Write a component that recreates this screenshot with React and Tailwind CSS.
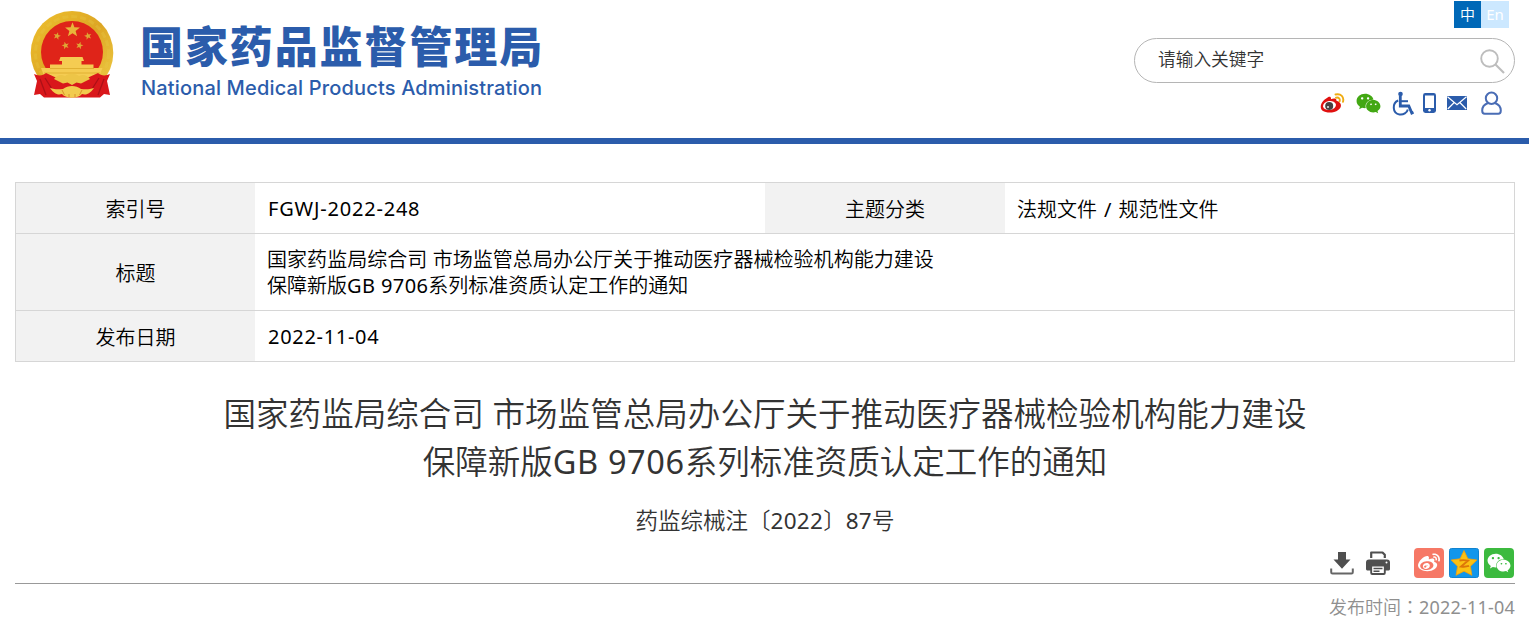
import React from "react";
import { FaWeixin, FaWeibo } from "react-icons/fa";

const star = (cx, cy, r, rot = 0) =>
  Array.from({ length: 10 }, (_, i) => {
    const a = ((i * 36 - 90 + rot) * Math.PI) / 180;
    const q = i % 2 ? r * 0.42 : r;
    return `${(cx + q * Math.cos(a)).toFixed(2)},${(cy + q * Math.sin(a)).toFixed(2)}`;
  }).join(" ");

function Emblem() {
  return (
    <svg width="84" height="90" viewBox="0 0 84 90" className="block">
      <defs>
        <linearGradient id="gold" x1="0" y1="0" x2="1" y2="1">
          <stop offset="0" stopColor="#eec12f" />
          <stop offset="0.5" stopColor="#dda624" />
          <stop offset="1" stopColor="#f0cf48" />
        </linearGradient>
      </defs>
      <ellipse cx="42" cy="42" rx="41.3" ry="42" fill="url(#gold)" />
      <circle cx="42" cy="42" r="36.5" fill="none" stroke="#e9c94a" strokeWidth="3" strokeDasharray="6 3" opacity="0.3" />
      <circle cx="42" cy="41" r="31" fill="#df2419" />
      <polygon points={star(42.5, 19, 7.8)} fill="#e8b63a" />
      <polygon points={star(27, 25, 3.9, 15)} fill="#dfa635" />
      <polygon points={star(58, 25, 3.9, -15)} fill="#dfa635" />
      <polygon points={star(35.500, 34.500, 3.9, -15)} fill="#dfa635" />
      <polygon points={star(49.500, 34.500, 3.9, 15)} fill="#dfa635" />
      <path d="M30.500 46h22l1.500 4h-2.500v3.500h12v3.500h9l-3 8-8 6H22l-8-6-3-8h9v-3.500h12V50h-3z" fill="#f5cc52" />
      <path d="M20 57.500h44M14 62h56" stroke="#dba92c" strokeWidth="0.8" />
      <path d="M4 63c4 2 9 2 12-1l13 6 13 4 13-4 13-6c3 3 8 3 12 1l-3 7 3 14-6-1-4 3.500H14L10 83l-6 1 3-14z" fill="#d9171b" />
      <path d="M10 68l6 16M15 67l7 11M74 68l-6 16M69 67l-7 11" stroke="#ad1017" strokeWidth="1.300" fill="none" />
      <path d="M24 68c3-4 7-5 11-3 4-3 10-3 14 0 4-2 8-1 11 3l-9 4.500-4.500-1-4.500 2.500-4.500-2.500-4.500 1z" fill="#edc547" />
      <path d="M20 77c6 2 10 1 13 1 5-4 13-4 18 0 3 0 7 1 13-1-5 7-9 7-12 6-4 5-16 5-20 0-3 1-7 1-12-6z" fill="#f2cb4e" />
      <path d="M32 79l2.500 5M52 79l-2.500 5M39 83v3M45 83v3" stroke="#d9902a" strokeWidth="1" />
    </svg>
  );
}

function WeiboEye() {
  return (
    <svg width="25" height="20" viewBox="0 0 25 20" className="block">
      <path d="M8 4.2c2-1 3.400-.2 2.900 2 3-1.200 6-1 5.500 1.600 6 1.800 5.500 6.400 1.800 9.200-4.200 3.200-11.600 3.400-15.600.8C-.6 15.200-.2 9 8 4.200z" fill="#e0100f" />
      <ellipse cx="9.500" cy="12.500" rx="6.500" ry="4.500" fill="#fff" transform="rotate(-8 9.500 12.500)" />
      <circle cx="9.200" cy="12.900" r="4" fill="#474040" />
      <circle cx="8" cy="14" r="1.100" fill="#ddd" />
      <path d="M15.500 1.500c5.500-1.300 8.800 2.400 7.500 7.300M16 4.700c2.900-.6 4.300 1 3.600 3.600" fill="none" stroke="#efac12" strokeWidth="1.900" strokeLinecap="round" />
    </svg>
  );
}

function Wheelchair() {
  return (
    <svg width="22" height="25" viewBox="0 0 22 25" className="block" fill="none" stroke="#2b5cab" strokeWidth="2">
      <circle cx="8.500" cy="3" r="2.300" fill="#2b5cab" stroke="none" />
      <path d="M8.300 5v10h8.500l3 7 1.700-.8" strokeWidth="2.800" />
      <path d="M8.500 10.200h7.500" />
      <path d="M6.200 9.500C0 12 .2 22.500 7.500 23.500c4 .6 7.500-1.700 8.300-5" strokeWidth="2" />
    </svg>
  );
}

function Phone() {
  return (
    <svg width="13" height="20" viewBox="0 0 13 20" className="block">
      <rect width="13" height="20" rx="2.400" fill="#2b5cab" />
      <rect x="2" y="2.500" width="9" height="12.500" fill="#fff" />
      <circle cx="6.500" cy="17.300" r="1.200" fill="#fff" />
    </svg>
  );
}

function Mail() {
  return (
    <svg width="20" height="14" viewBox="0 0 20 14" className="block">
      <rect width="20" height="14" rx="0.600" fill="#2b5cab" />
      <path d="M.5.800L10 8.600 19.500.800M.8 13l6.400-6.500M19.200 13l-6.400-6.500" fill="none" stroke="#fff" strokeWidth="1.200" />
    </svg>
  );
}

function Person() {
  return (
    <svg width="21" height="24" viewBox="0 0 21 24" className="block" fill="none" stroke="#4a6db5" strokeWidth="2">
      <circle cx="10.500" cy="7.300" r="5.700" />
      <path d="M7 12C3 13.500 1.200 16 1.200 19.500c0 2.500.8 3.300 2.500 3.300h13.600c1.700 0 2.500-.8 2.500-3.300 0-3.500-1.800-6-5.800-7.500" />
    </svg>
  );
}

function Download() {
  return (
    <svg width="24" height="24" viewBox="0 0 24 24" className="block">
      <path d="M8 1h8v7.500h4.500L12 17.800 3.500 8.500H8z" fill="#4f4f4f" />
      <path d="M1.200 17.500v3.700q0 1.300 1.300 1.300h19q1.300 0 1.300-1.300v-3.700" fill="none" stroke="#666" strokeWidth="2" />
    </svg>
  );
}

function Printer() {
  return (
    <svg width="24" height="24" viewBox="0 0 24 24" className="block">
      <path d="M5.200 7V1.500h11.300l2.300 2.300V7" fill="none" stroke="#4f4f4f" strokeWidth="2.200" strokeLinejoin="round" />
      <path d="M3 8.500h18c2 0 3 1 3 3V18c0 1-1 1.500-2 1.500h-3V14H5v5.500H2c-1 0-2-.5-2-1.500v-6.500c0-2 1-3 3-3z" fill="#4f4f4f" />
      <rect x="5.200" y="14.500" width="13.600" height="8.500" rx="1" fill="#fff" stroke="#4f4f4f" strokeWidth="1.900" />
      <path d="M7.500 17.500h9M7.500 20.300h6" stroke="#4f4f4f" strokeWidth="1.400" />
      <circle cx="20.500" cy="11.500" r="1" fill="#fff" />
    </svg>
  );
}

function QzoneStar() {
  return (
    <svg width="30" height="30" viewBox="0 0 30 30" className="block">
      <rect x=".5" y=".5" width="29" height="29" rx="2" fill="#1296ec" stroke="#1183cf" />
      <path d="M15 2.500l3.900 8.300 9 1.200-6.500 6.300 1.500 9L15 23.200l-8 4.100 1.600-9L2.100 12l9-1.200z" fill="#fbc113" stroke="#f2a00d" strokeWidth=".8" strokeLinejoin="round" />
      <path d="M10.500 12.500c3-.6 6-.5 8.500.2l-7 5.800c3 .4 5.500.2 8-.6" fill="none" stroke="#dd7608" strokeWidth="1.900" />
    </svg>
  );
}

function Label({ children }) {
  return <div className="flex items-center justify-center bg-[#f2f2f2] pt-[3px]">{children}</div>;
}

export default function App() {
  return (
    <div className="h-[627px] w-[1529px] overflow-hidden bg-white font-['Noto_Sans','Noto_Sans_CJK_SC',sans-serif] font-[350] text-black">
      <header className="flex h-36 justify-between border-b-[6px] border-[#2b5cab]">
        <div className="flex pt-[11px] pl-[30px]">
          <Emblem />
          <div className="ml-[26px] whitespace-nowrap text-[#2b5cab]">
            <div className="mt-[3px] h-[60px] font-['Noto_Sans_CJK_SC',sans-serif] text-[43px] leading-[60px] font-black tracking-[1.9px]">国家药品监督管理局</div>
            <div className="ml-px font-['Inter',sans-serif] text-[20px] leading-[28px] font-medium tracking-[0.16px]">National Medical Products Administration</div>
          </div>
        </div>
        <div className="flex w-[395px] flex-col">
          <div className="mt-px ml-[320px] flex h-[27px] text-[15px] leading-[26px] text-white">
            <span className="w-[27px] bg-[#0068b7] text-center">中</span>
            <span className="w-7 bg-[#cce8ff] text-center font-normal">En</span>
          </div>
          <div className="mt-[10px] flex h-[45px] w-[381px] items-center justify-between rounded-full border border-[#b5b5b5] pr-[9px] pl-[23px]">
            <span className="pb-[3px] text-[17.7px] leading-6 text-[#333]">请输入关键字</span>
            <svg width="25" height="25" viewBox="0 0 25 25" fill="none" stroke="#bdbdbd" className="mt-0.5 block">
              <circle cx="9.500" cy="9.500" r="8.300" strokeWidth="1.900" />
              <path d="M15.500 15.500l8.500 8.500" strokeWidth="2.100" />
            </svg>
          </div>
          <div className="mt-2 flex h-6 items-center pl-[186px]">
            <WeiboEye />
            <FaWeixin className="ml-[11px] h-[25px] w-[25px] text-[#43a813]" />
            <div className="ml-[11px]"><Wheelchair /></div>
            <div className="ml-[9px]"><Phone /></div>
            <div className="ml-[11px]"><Mail /></div>
            <div className="ml-[14px]"><Person /></div>
          </div>
        </div>
      </header>

      <main className="mr-[14px] ml-[15px]">
        <section className="mt-[38px] grid h-[180px] grid-rows-[50px_76px_50px] gap-y-px border border-[#d6d6d6] bg-[#d6d6d6] text-[20px] leading-[26px]">
          <div className="grid grid-cols-[239px_510px_240px_1fr] bg-white">
            <Label>索引号</Label>
            <div className="flex items-center pt-0.5 pl-[13px] font-normal tracking-[0.8px]">FGWJ-2022-248</div>
            <Label>主题分类</Label>
            <div className="flex items-center pt-[3px] pl-3">法规文件<span className="px-[7px] font-normal">/</span>规范性文件</div>
          </div>
          <div className="grid grid-cols-[239px_1fr] bg-white">
            <Label>标题</Label>
            <div className="flex flex-col justify-center pt-0.5 pl-3 whitespace-nowrap">
              <div className="tracking-[0.05px]">国家药监局综合司 市场监管总局办公厅关于推动医疗器械检验机构能力建设</div>
              <div>保障新版<span className="font-normal tracking-[0.4px]">GB 9706</span>系列标准资质认定工作的通知</div>
            </div>
          </div>
          <div className="grid grid-cols-[239px_1fr] bg-white">
            <Label>发布日期</Label>
            <div className="flex items-center pt-0.5 pl-[13px] font-normal tracking-[0.7px]">2022-11-04</div>
          </div>
        </section>

        <h1 className="mt-7 text-center text-[32.5px] leading-[48px] font-[350] whitespace-nowrap text-[#333]">
          <span className="tracking-[0.06px]">国家药监局综合司 市场监管总局办公厅关于推动医疗器械检验机构能力建设</span>
          <br />
          保障新版<span className="font-normal tracking-[0.6px]">GB 9706</span>系列标准资质认定工作的通知
        </h1>
        <p className="mt-[18px] text-center text-[22.5px] leading-[34px] text-[#333]">药监综械注〔<span className="font-normal tracking-[0.3px]">2022</span>〕<span className="font-normal tracking-[0.3px]">87</span>号</p>

        <div className="mt-[10px] flex h-[36px] justify-end border-b border-[#999] pr-px">
          <div className="mt-[3px] mr-3"><Download /></div>
          <div className="mt-[3px] mr-6"><Printer /></div>
          <div className="flex gap-[5px]">
            <div className="flex h-[30px] w-[30px] items-center justify-center rounded-sm bg-[#f67866]"><FaWeibo className="h-[22px] w-[22px] text-white" /></div>
            <QzoneStar />
            <div className="flex h-[30px] w-[30px] items-center justify-center rounded-sm bg-[#3cba3f]"><FaWeixin className="h-6 w-6 text-white" /></div>
          </div>
        </div>
        <div className="mt-2 text-right text-[18px] leading-7 text-[#8f8f8f]">发布时间<span className="font-['Noto_Sans_CJK_TC',sans-serif]">：</span><span className="font-normal tracking-[0.2px]">2022-11-04</span></div>
      </main>
    </div>
  );
}
